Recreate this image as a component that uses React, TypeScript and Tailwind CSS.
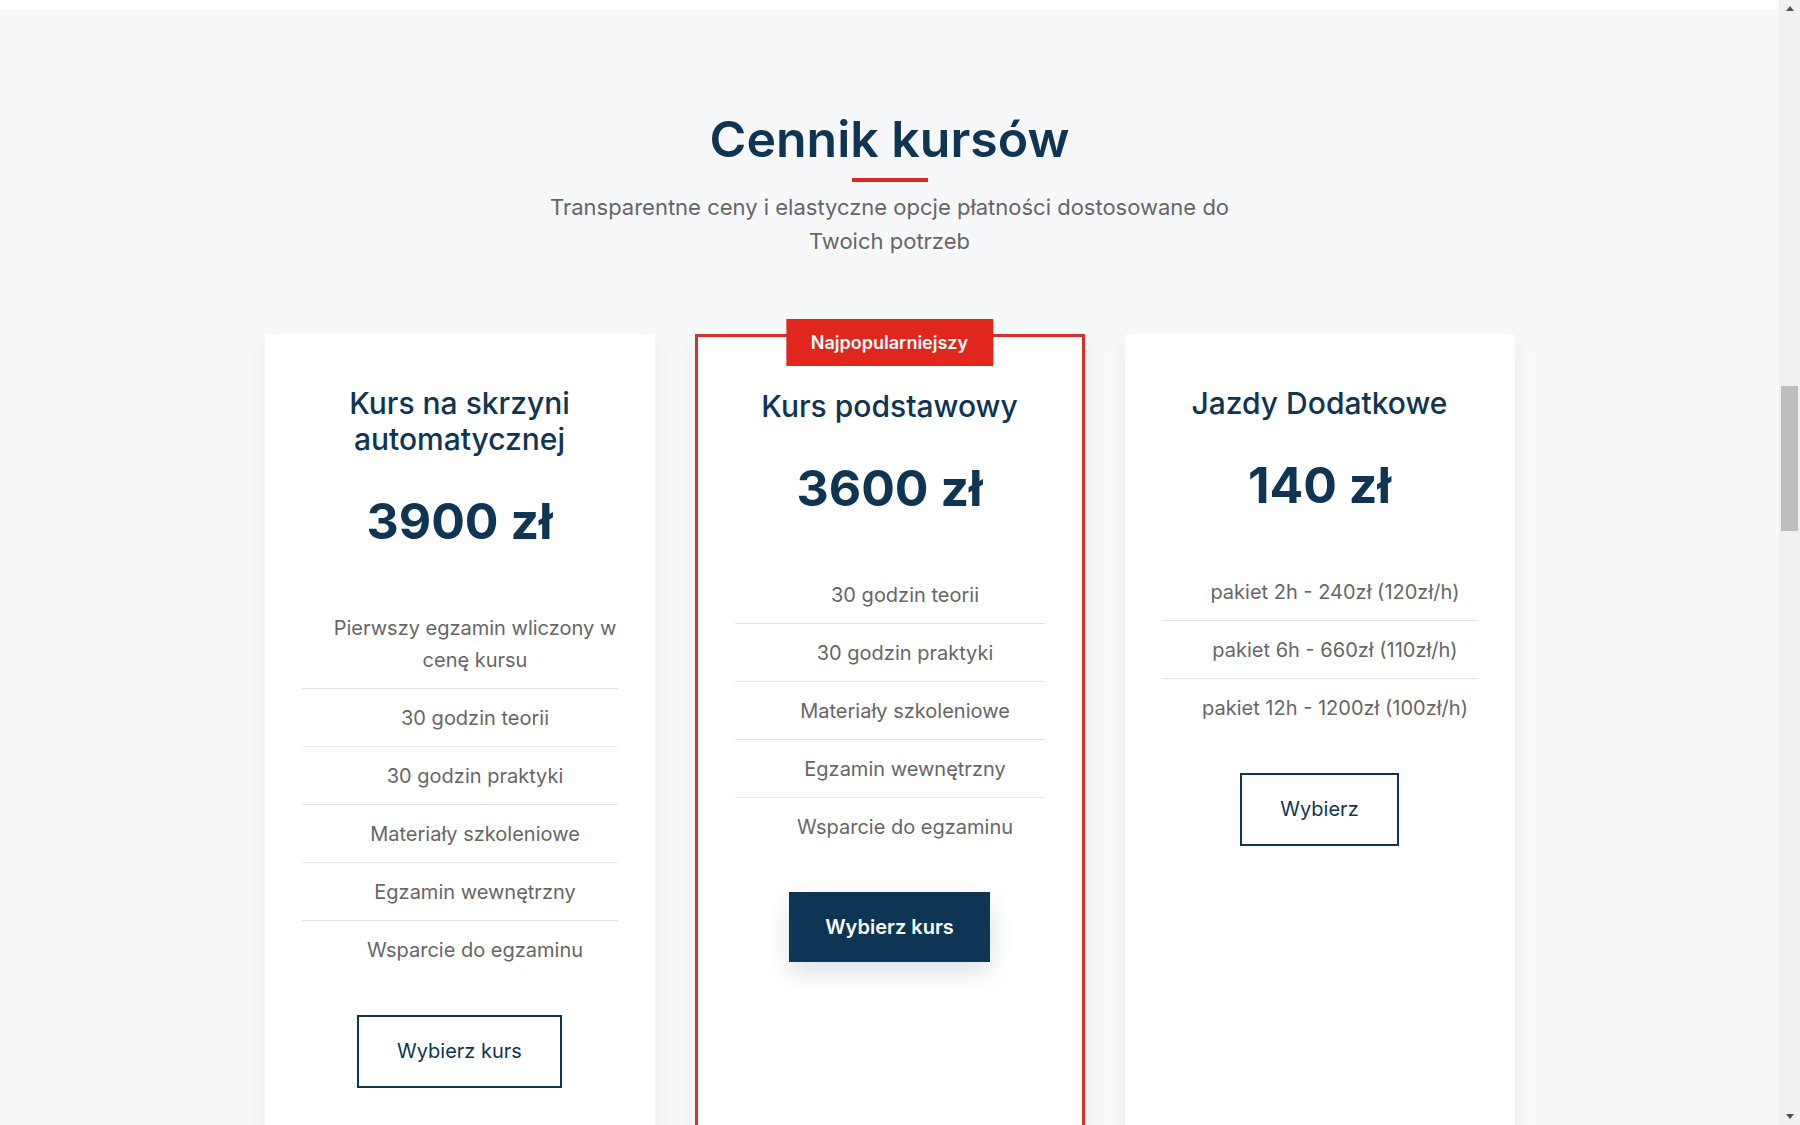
import React from "react";

type Plan = {
  title: React.ReactNode;
  price: string;
  features: string[];
  button: string;
  featured?: boolean;
};

const plans: Plan[] = [
  {
    title: (
      <>
        Kurs na skrzyni
        <br />
        automatycznej
      </>
    ),
    price: "3900 zł",
    features: [
      "Pierwszy egzamin wliczony w cenę kursu",
      "30 godzin teorii",
      "30 godzin praktyki",
      "Materiały szkoleniowe",
      "Egzamin wewnętrzny",
      "Wsparcie do egzaminu",
    ],
    button: "Wybierz kurs",
  },
  {
    title: "Kurs podstawowy",
    price: "3600 zł",
    features: [
      "30 godzin teorii",
      "30 godzin praktyki",
      "Materiały szkoleniowe",
      "Egzamin wewnętrzny",
      "Wsparcie do egzaminu",
    ],
    button: "Wybierz kurs",
    featured: true,
  },
  {
    title: "Jazdy Dodatkowe",
    price: "140 zł",
    features: [
      "pakiet 2h - 240zł (120zł/h)",
      "pakiet 6h - 660zł (110zł/h)",
      "pakiet 12h - 1200zł (100zł/h)",
    ],
    button: "Wybierz",
  },
];

function Card({ plan }: { plan: Plan }) {
  return (
    <div
      className={
        plan.featured
          ? "relative bg-white text-center px-[37px] pt-[51px] pb-[51px] border-[3px] border-[#d5302c] shadow-[0_5px_20px_rgba(0,0,0,0.05)]"
          : "relative bg-white text-center px-[37px] pt-[51px] pb-[51px] shadow-[0_5px_20px_rgba(0,0,0,0.05)]"
      }
    >
      {plan.featured && (
        <div className="absolute top-[-18px] left-1/2 -translate-x-1/2 h-[47px] px-[25px] flex items-center bg-[#e1261d] text-white text-[18px] font-semibold whitespace-nowrap">
          Najpopularniejszy
        </div>
      )}
      <h3 className="text-[30px] leading-[36px] font-medium text-[#0f3554]">{plan.title}</h3>
      <div className="mt-[33px] text-[50px] leading-[62px] font-bold text-[#0f3554]">{plan.price}</div>
      <ul className="mt-[47px]">
        {plan.features.map((f) => (
          <li
            key={f}
            className="border-b border-[#e4e4e4] last:border-b-0 py-[12.5px] pl-[31px] text-[20px] leading-[32px] text-[#666666]"
          >
            {f}
          </li>
        ))}
      </ul>
      <div className="mt-[37px] flex justify-center">
        {plan.featured ? (
          <button className="bg-[#0f3554] text-white font-semibold text-[20px] leading-[28px] px-[36px] py-[21px] shadow-[0_10px_25px_rgba(15,53,84,0.15)]">
            {plan.button}
          </button>
        ) : (
          <button className="border-2 border-[#0f3554] text-[#0f3554] font-normal text-[20px] leading-[27px] px-[38px] py-[21px] bg-white">
            {plan.button}
          </button>
        )}
      </div>
    </div>
  );
}

export default function App() {
  return (
    <div
      className="flex h-[1125px] w-[1800px] overflow-hidden"
      style={{ fontFamily: "Inter, 'Noto Sans', sans-serif" }}
    >
      <div className="flex-1 flex flex-col bg-[#f7f8fa]">
        <div className="h-[9px] shrink-0 bg-white" />
        <section className="pt-[100px] flex flex-col items-center">
          <h2 className="text-[50px] leading-[60px] font-semibold text-[#0f3554]">
            Cennik kursów
          </h2>
          <div className="mt-[9px] w-[76px] h-[4px] bg-[#e1261d]" />
          <p className="mt-[8px] max-w-[700px] text-center text-[22px] leading-[34px] text-[#666666]">
            Transparentne ceny i elastyczne opcje płatności dostosowane do Twoich potrzeb
          </p>
          <div className="mt-[76px] w-[1250px] grid grid-cols-3 gap-[40px] items-stretch">
            {plans.map((p, i) => (
              <Card key={i} plan={p} />
            ))}
          </div>
        </section>
      </div>
      <div className="w-[21px] h-full bg-[#f1f1f1] flex flex-col items-center">
        <div className="h-[17px] w-full flex items-center justify-center">
          <div className="w-0 h-0 border-l-[4px] border-r-[4px] border-b-[5px] border-l-transparent border-r-transparent border-b-[#505050]" />
        </div>
        <div className="mt-[369px] w-[17px] h-[145px] bg-[#bdbdbd]" />
        <div className="flex-1" />
        <div className="h-[17px] w-full flex items-center justify-center">
          <div className="w-0 h-0 border-l-[4px] border-r-[4px] border-t-[5px] border-l-transparent border-r-transparent border-t-[#505050]" />
        </div>
      </div>
    </div>
  );
}
